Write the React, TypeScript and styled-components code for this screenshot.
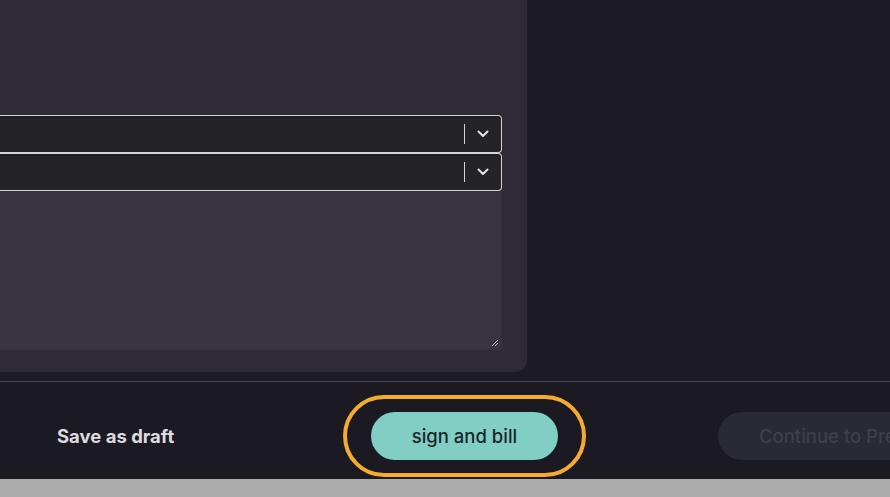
import styled, { createGlobalStyle } from 'styled-components'

const GlobalStyle = createGlobalStyle`
    html, body {
        margin: 0;
        padding: 0;
        background: #1c1b26;
        font-family: Inter, "Noto Sans", sans-serif;
    }
    #root {
        width: 890px;
        height: 497px;
        overflow: hidden;
    }
`

const Page = styled.div`
    display: flex;
    flex-direction: column;
    width: 890px;
    height: 497px;
`

const Main = styled.div`
    display: flex;
    height: 381px;
    background: #1c1b26;
`

const Panel = styled.div`
    width: 527px;
    height: 372px;
    box-sizing: border-box;
    background: #2e2b36;
    border-radius: 0 0 12px 0;
    padding: 115px 25px 22px 0;
    display: flex;
    flex-direction: column;
`

const SelectBox = styled.div`
    height: 38px;
    box-sizing: border-box;
    background: #242428;
    border: 1px solid #d4d4d8;
    border-left: none;
    border-radius: 0 4px 4px 0;
    display: flex;
    align-items: center;
    justify-content: flex-end;
    box-shadow: inset 0 2px 0 #1f1f23;
`

const Separator = styled.span`
    width: 1px;
    height: 20px;
    background: #d4d4d8;
`

const ChevronWrap = styled.span`
    width: 36px;
    display: flex;
    align-items: center;
    justify-content: center;
    color: #e2e2e6;
`

const TextArea = styled.div`
    position: relative;
    flex: 1;
    background: #38353f;
    border: 1px solid #34313c;
    border-left: none;
    border-radius: 0 0 4px 0;
`

const Grip = styled.svg`
    position: absolute;
    right: 2px;
    bottom: 2px;
`

const Divider = styled.div`
    height: 1px;
    background: #4a4954;
`

const Footer = styled.div`
    height: 97px;
    box-sizing: border-box;
    padding-top: 13px;
    background: #1b1a23;
    display: flex;
    align-items: flex-start;
`

const DraftLink = styled.span`
    flex-shrink: 0;
    margin: 28px 0 0 57px;
    width: 118px;
    line-height: 26px;
    font-size: 18.5px;
    font-weight: 700;
    color: #dcdce0;
    white-space: nowrap;
`

const FocusRing = styled.div`
    flex-shrink: 0;
    margin-left: 168px;
    border: 4px solid #f5ab2e;
    border-radius: 999px;
    padding: 13px 24px;
    display: flex;
`

const PillButton = styled.button<{ $disabled?: boolean }>`
    height: 48px;
    border: none;
    border-radius: 24px;
    font-family: Inter, "Noto Sans", sans-serif;
    font-size: 18.5px;
    font-weight: 500;
    white-space: nowrap;
    background: ${p => (p.$disabled ? '#2a2a33' : '#81cec5')};
    color: ${p => (p.$disabled ? '#3f3f4a' : '#1c2628')};
    width: ${p => (p.$disabled ? '260px' : '187px')};
    padding: ${p => (p.$disabled ? '0 0 0 41px' : '0')};
    text-align: ${p => (p.$disabled ? 'left' : 'center')};
    flex-shrink: 0;
`

const ContinueWrap = styled.div`
    margin: 17px 0 0 132px;
    flex-shrink: 0;
`

const Strip = styled.div`
    flex: 1;
    background: #acacac;
`

const Chevron = () => (
    <svg width="12" height="8" viewBox="0 0 12 8" fill="none">
        <path d="M1.5 1.5 L6 6 L10.5 1.5" stroke="currentColor" strokeWidth="2" strokeLinecap="round" strokeLinejoin="round" />
    </svg>
)

const Select = () => (
    <SelectBox>
        <Separator />
        <ChevronWrap>
            <Chevron />
        </ChevronWrap>
    </SelectBox>
)

export default function App() {
    return (
        <Page>
            <GlobalStyle />
            <Main>
                <Panel>
                    <Select />
                    <Select />
                    <TextArea>
                        <Grip width="9" height="9" viewBox="0 0 9 9">
                            <path d="M8 2 L2 8 M8 5 L5 8" stroke="#b8b8c0" strokeWidth="1" />
                        </Grip>
                    </TextArea>
                </Panel>
            </Main>
            <Divider />
            <Footer>
                <DraftLink>Save as draft</DraftLink>
                <FocusRing>
                    <PillButton>sign and bill</PillButton>
                </FocusRing>
                <ContinueWrap>
                    <PillButton $disabled>Continue to Preview</PillButton>
                </ContinueWrap>
            </Footer>
            <Strip />
        </Page>
    )
}
